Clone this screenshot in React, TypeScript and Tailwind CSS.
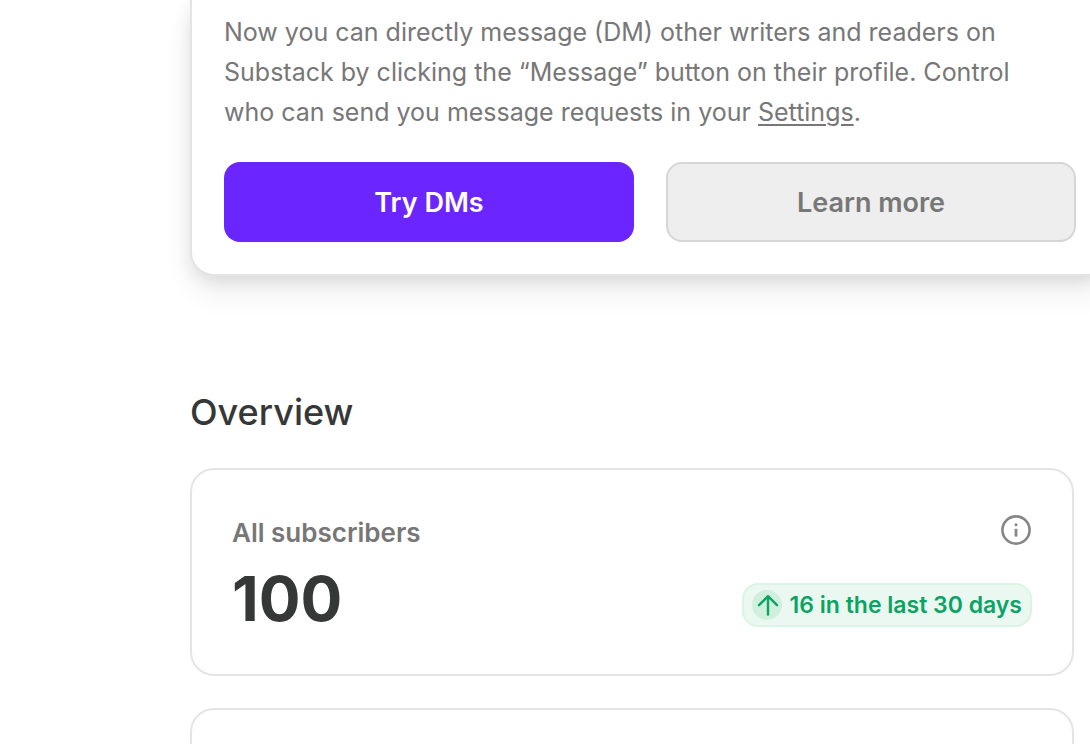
import type { ReactNode } from "react"

const InfoIcon = () => (
  <svg width="32" height="32" viewBox="0 0 32 32" fill="none" aria-hidden="true">
    <circle cx="16" cy="16" r="13.6" stroke="#868686" strokeWidth="2.6" />
    <circle cx="16" cy="10.8" r="1.5" fill="#868686" />
    <path d="M14.6 14.8h2.8v7.8h-2.8z" fill="#868686" />
  </svg>
)

const ArrowUpIcon = () => (
  <svg width="30" height="30" viewBox="0 0 30 30" fill="none" aria-hidden="true">
    <path
      d="M16 24.5V6.2M7 15.2 16 6.2l9 9"
      stroke="#09a463"
      strokeWidth="2.4"
      strokeLinecap="round"
      strokeLinejoin="round"
    />
  </svg>
)

const StatCard = ({ children }: { children?: ReactNode }) => (
  <div className="min-h-52 rounded-3xl border-2 border-[#e4e4e4] bg-white px-10 pt-8 pb-10">
    {children}
  </div>
)

const App = () => {
  return (
    <main className="h-screen overflow-hidden bg-white pl-[190px] pr-4 font-['Inter',sans-serif]">

      {/* DM announcement */}
      <section className="-mr-9 rounded-b-3xl border-2 border-t-0 border-[#e4e4e4] bg-white px-8 pt-3 pb-8 shadow-[0_16px_32px_-4px_rgba(0,0,0,0.10),0_4px_16px_rgba(0,0,0,0.08)]">
        <p className="max-w-[820px] text-[25px] leading-10 text-[#777777]">
          Now you can directly message (DM) other writers and readers on Substack by clicking the “Message” button on their profile. Control who can send you message requests in your{" "}
          <a href="#settings" className="underline decoration-2 underline-offset-3">Settings</a>.
        </p>
        <div className="mt-[30px] grid grid-cols-2 gap-8">
          <button className="h-20 rounded-2xl bg-[#6b26ff] pt-0.5 text-[27px] font-semibold text-white">
            Try DMs
          </button>
          <button className="h-20 rounded-2xl border-2 border-[#d6d6d6] bg-[#eeeeee] pt-0.5 text-[27px] font-semibold text-[#777777]">
            Learn more
          </button>
        </div>
      </section>

      {/* Overview */}
      <section className="mt-28">
        <h2 className="mb-8 text-[36px] leading-12 font-medium text-[#363737]">Overview</h2>
        <div className="flex flex-col gap-8">
          <StatCard>
            <div className="flex justify-between">
              <div>
                <h3 className="text-[26px] leading-[62px] font-semibold text-[#777777]">All subscribers</h3>
                <div className="text-[62px] leading-[70px] font-bold text-[#363737]">100</div>
              </div>
              <div className="flex flex-col items-end justify-between pt-3 pb-[7px]">
                <button aria-label="About subscribers">
                  <InfoIcon />
                </button>
                <span className="flex h-11 items-center gap-2 rounded-2xl border-2 border-[#daf4e5] bg-[#ebf8f1] px-2 text-[23px] font-semibold text-[#09a463]">
                  <span className="rounded-full bg-[#d1efdd]">
                    <ArrowUpIcon />
                  </span>
                  16 in the last 30 days
                </span>
              </div>
            </div>
          </StatCard>
          <StatCard />
        </div>
      </section>
    </main>
  )
}

export default App
